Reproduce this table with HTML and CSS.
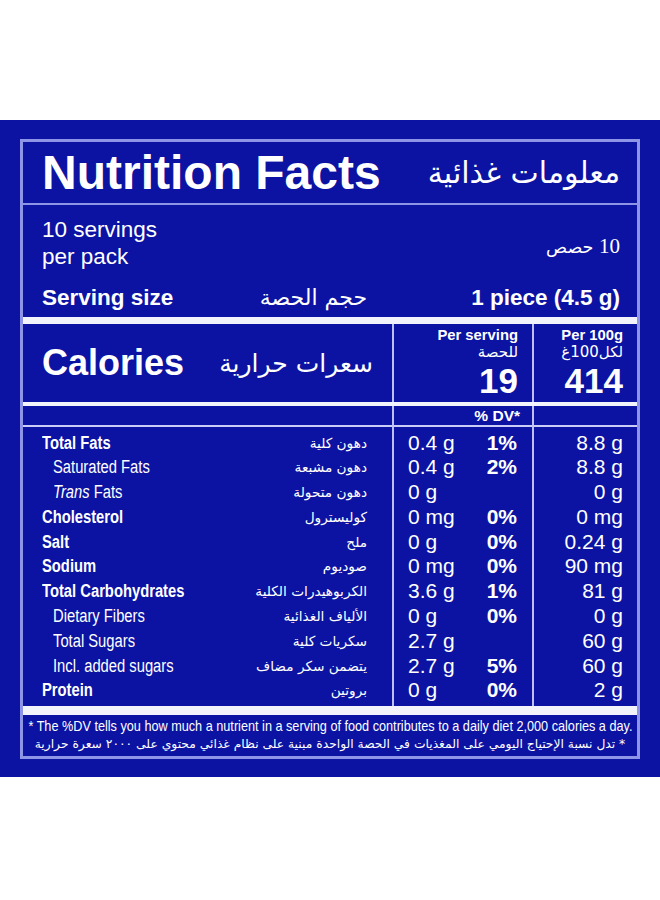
FILE: index.html
```html
<!DOCTYPE html>
<html lang="en">
<head>
<meta charset="utf-8">
<title>Nutrition Facts</title>
<link rel="stylesheet" href="styles.css">
</head>
<body>
<div class="panel">
  <div class="label">
    <div class="title-row">
      <h1 class="title">Nutrition Facts</h1>
      <div class="ar title-ar" dir="rtl">معلومات غذائية</div>
    </div>
    <div class="servings">
      <div class="serv-row">
        <div class="serv-en">10 servings<br>per pack</div>
        <div class="ar serv-ar" dir="rtl"><span class="num">10</span> حصص</div>
      </div>
      <div class="size-row">
        <div class="size-name">
          <span class="size-en">Serving size</span>
          <span class="ar size-ar" dir="rtl">حجم الحصة</span>
        </div>
        <div class="size-val">1 piece (4.5 g)</div>
      </div>
    </div>
    <div class="bar bar-7"></div>
    <div class="table">
      <div class="cal-name">
        <span class="cal-en">Calories</span>
        <span class="ar cal-ar" dir="rtl">سعرات حرارية</span>
      </div>
      <div class="c2 cal-col">
        <span class="col-head">Per serving</span>
        <span class="ar col-ar" dir="rtl">للحصة</span>
        <span class="cal-num">19</span>
      </div>
      <div class="c3 cal-col">
        <span class="col-head">Per 100g</span>
        <span class="ar col-ar" dir="rtl">لكل100غ</span>
        <span class="cal-num">414</span>
      </div>

      <div class="bar bar-4 span3"></div>

      <div class="dv"></div>
      <div class="c2 dv dv-head">% DV*</div>
      <div class="c3 dv"></div>

      <div class="row first">
        <div class="n1 bold"><span class="en">Total Fats</span><span class="ar" dir="rtl">دهون كلية</span></div>
        <div class="c2 n2"><span>0.4 g</span><span class="pct">1%</span></div>
        <div class="c3 n3">8.8 g</div>
      </div>
      <div class="row">
        <div class="n1 sub"><span class="en">Saturated Fats</span><span class="ar" dir="rtl">دهون مشبعة</span></div>
        <div class="c2 n2"><span>0.4 g</span><span class="pct">2%</span></div>
        <div class="c3 n3">8.8 g</div>
      </div>
      <div class="row">
        <div class="n1 sub"><span class="en"><i>Trans</i> Fats</span><span class="ar" dir="rtl">دهون متحولة</span></div>
        <div class="c2 n2"><span>0 g</span><span class="pct"></span></div>
        <div class="c3 n3">0 g</div>
      </div>
      <div class="row">
        <div class="n1 bold"><span class="en">Cholesterol</span><span class="ar" dir="rtl">كوليسترول</span></div>
        <div class="c2 n2"><span>0 mg</span><span class="pct">0%</span></div>
        <div class="c3 n3">0 mg</div>
      </div>
      <div class="row">
        <div class="n1 bold"><span class="en">Salt</span><span class="ar" dir="rtl">ملح</span></div>
        <div class="c2 n2"><span>0 g</span><span class="pct">0%</span></div>
        <div class="c3 n3">0.24 g</div>
      </div>
      <div class="row">
        <div class="n1 bold"><span class="en">Sodium</span><span class="ar" dir="rtl">صوديوم</span></div>
        <div class="c2 n2"><span>0 mg</span><span class="pct">0%</span></div>
        <div class="c3 n3">90 mg</div>
      </div>
      <div class="row">
        <div class="n1 bold"><span class="en">Total Carbohydrates</span><span class="ar" dir="rtl">الكربوهيدرات الكلية</span></div>
        <div class="c2 n2"><span>3.6 g</span><span class="pct">1%</span></div>
        <div class="c3 n3">81 g</div>
      </div>
      <div class="row">
        <div class="n1 sub"><span class="en">Dietary Fibers</span><span class="ar" dir="rtl">الألياف الغذائية</span></div>
        <div class="c2 n2"><span>0 g</span><span class="pct">0%</span></div>
        <div class="c3 n3">0 g</div>
      </div>
      <div class="row">
        <div class="n1 sub"><span class="en">Total Sugars</span><span class="ar" dir="rtl">سكريات كلية</span></div>
        <div class="c2 n2"><span>2.7 g</span><span class="pct"></span></div>
        <div class="c3 n3">60 g</div>
      </div>
      <div class="row">
        <div class="n1 sub"><span class="en">Incl. added sugars</span><span class="ar" dir="rtl">يتضمن سكر مضاف</span></div>
        <div class="c2 n2"><span>2.7 g</span><span class="pct">5%</span></div>
        <div class="c3 n3">60 g</div>
      </div>
      <div class="row last">
        <div class="n1 bold"><span class="en">Protein</span><span class="ar" dir="rtl">بروتين</span></div>
        <div class="c2 n2"><span>0 g</span><span class="pct">0%</span></div>
        <div class="c3 n3">2 g</div>
      </div>
    </div>
    <div class="bar bar-9"></div>
    <div class="foot">
      <div class="foot-line"><p class="foot-en">* The %DV tells you how much a nutrient in a serving of food contributes to a daily diet 2,000 calories a day.</p></div>
      <div class="foot-line"><p class="ar foot-ar" dir="rtl">* تدل نسبة الإحتياج اليومي على المغذيات في الحصة الواحدة مبنية على نظام غذائي محتوي على ٢٠٠٠ سعرة حرارية</p></div>
    </div>
  </div>
</div>
</body>
</html>
```

FILE: styles.css
```css
* { box-sizing: border-box; }

html, body {
  margin: 0;
  padding: 0;
  background: #ffffff;
}

body {
  font-family: "Liberation Sans", Arial, sans-serif;
  color: #ffffff;
}

.panel {
  margin-top: 120px;
  background: #0c13a3;
  padding: 19px 20px 18px 20px;
}

.label {
  border: 3px solid #8e94e6;
  background: #0c13a3;
}

.ar {
  font-family: "DejaVu Sans", sans-serif;
  font-weight: normal;
}

/* title */
.title-row {
  height: 63px;
  display: flex;
  align-items: center;
  justify-content: space-between;
  padding: 0 17px 0 19px;
  border-bottom: 2px solid #8e94e6;
}

.title {
  margin: 0;
  font-size: 48px;
  font-weight: bold;
  line-height: 1;
}

.title-ar {
  font-size: 30px;
  line-height: 1;
}

/* servings */
.servings {
  padding: 11px 17px 6px 0;
}

.serv-row {
  display: flex;
  align-items: center;
  justify-content: space-between;
  padding-left: 19px;
}

.serv-en {
  font-size: 22.5px;
  line-height: 27px;
}

.serv-ar {
  font-size: 17.5px;
  padding-top: 6px;
}

.serv-ar .num {
  font-family: "Liberation Serif", serif;
  font-size: 21px;
}

.size-row {
  margin-top: 14px;
  display: grid;
  grid-template-columns: 369px 1fr;
  align-items: center;
  line-height: 27px;
}

.size-name {
  display: flex;
  justify-content: space-between;
  align-items: center;
  padding: 0 25px 0 19px;
}

.size-en {
  font-size: 22.5px;
  font-weight: bold;
}

.size-ar {
  font-size: 22px;
}

.size-val {
  text-align: right;
  font-size: 22.5px;
  font-weight: bold;
}

/* bars */
.bar {
  background: #f3f4fb;
}
.bar-7 { height: 7px; }
.bar-4 { height: 4px; }
.bar-9 { height: 9px; }
.span3 { grid-column: 1 / span 3; }

/* table */
.table {
  display: grid;
  grid-template-columns: 369px 140px 105px;
}

.row { display: contents; }

.c2, .c3 {
  border-left: 2px solid #bcc0f2;
}

.cal-name {
  height: 78px;
  display: flex;
  align-items: center;
  justify-content: space-between;
  padding: 0 19px 0 19px;
}

.cal-en {
  font-size: 36px;
  font-weight: bold;
  line-height: 1;
}

.cal-ar {
  font-size: 25px;
  line-height: 1;
}

.cal-col {
  height: 78px;
  display: flex;
  flex-direction: column;
  align-items: flex-end;
  padding: 3px 14px 0 0;
}

.col-head {
  font-size: 14.8px;
  font-weight: bold;
  line-height: 16px;
}

.col-ar {
  font-size: 15px;
  line-height: 18px;
}

.cal-num {
  font-size: 35px;
  font-weight: bold;
  line-height: 40px;
}

.dv {
  height: 21px;
  border-bottom: 2px solid #c9ccf6;
}

.dv-head {
  text-align: right;
  padding-right: 12px;
  font-size: 15.5px;
  font-weight: bold;
  line-height: 19px;
}

.n1, .n2, .n3 {
  height: 24.8px;
  line-height: 24.8px;
}

.row.first > div {
  height: 28.3px;
  padding-top: 3.5px;
}

.row.last > div {
  height: 27.8px;
  padding-bottom: 3px;
}

.n1 {
  display: flex;
  justify-content: space-between;
  align-items: center;
  padding-right: 25px;
  font-size: 18px;
}

.n1 .en {
  display: inline-block;
  white-space: nowrap;
  transform: scaleX(0.82);
  transform-origin: left center;
}

.n1.bold {
  padding-left: 19px;
  font-weight: bold;
}

.n1.sub {
  padding-left: 30px;
}

.n1 .ar {
  font-size: 13.7px;
}

.n2 {
  display: flex;
  justify-content: space-between;
  align-items: center;
  padding: 0 15px 0 14px;
  font-size: 21px;
}

.pct {
  font-weight: bold;
}

.n3 {
  text-align: right;
  padding-right: 14px;
  font-size: 21px;
}

/* footnote */
.foot {
  padding: 2px 0 3px 0;
}

.foot-line {
  display: flex;
  justify-content: center;
}

.foot p {
  margin: 0;
  line-height: 18px;
  white-space: nowrap;
  flex: none;
}

.foot-en {
  font-size: 15px;
  transform: scaleX(0.845);
  transform-origin: center;
}

.foot-ar {
  font-size: 12.3px;
}
```
